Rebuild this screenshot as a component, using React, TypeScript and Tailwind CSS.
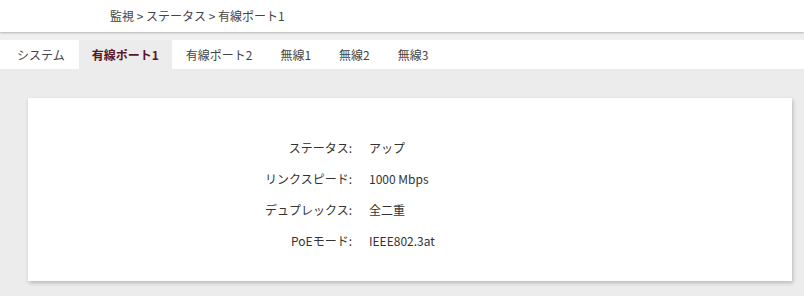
export default function App() {
  const tabs = ["システム", "有線ポート1", "有線ポート2", "無線1", "無線2", "無線3"];
  const active = 1;
  const rows = [
    ["ステータス:", "アップ"],
    ["リンクスピード:", "1000 Mbps"],
    ["デュプレックス:", "全二重"],
    ["PoEモード:", "IEEE802.3at"],
  ];

  return (
    <div className="min-h-[296px] bg-[#ececec] text-[12px] text-[#333] font-['Noto_Sans_CJK_JP','Noto_Sans',sans-serif]">
      {/* header */}
      <div className="relative z-10 h-[32px] bg-white pl-[110px] leading-[32px] text-[#444] shadow-[0_1px_2px_rgba(0,0,0,0.25)]">
        監視 &gt; ステータス &gt; 有線ポート1
      </div>

      <div className="h-[8px] bg-[#efefef]" />

      {/* tabs */}
      <div className="flex h-[29px] bg-white pl-[3px]">
        {tabs.map((t, i) => (
          <div
            key={t}
            className={
              i === active
                ? "flex items-center bg-[#ececec] px-[13px] font-bold text-[#5b1626]"
                : "flex items-center px-[14px] text-[#444]"
            }
          >
            {t}
          </div>
        ))}
      </div>

      {/* content */}
      <div className="pl-[28px] pr-[12px] pt-[29px] pb-[15px]">
        <div className="h-[183px] bg-white pt-[34px] shadow-[1px_2px_4px_rgba(0,0,0,0.22)]">
          {rows.map(([k, v]) => (
            <div key={k} className="grid h-[31px] grid-cols-[324px_1fr] items-center">
              <span className="text-right">{k}</span>
              <span className="pl-[17px]">{v}</span>
            </div>
          ))}
        </div>
      </div>
    </div>
  );
}
